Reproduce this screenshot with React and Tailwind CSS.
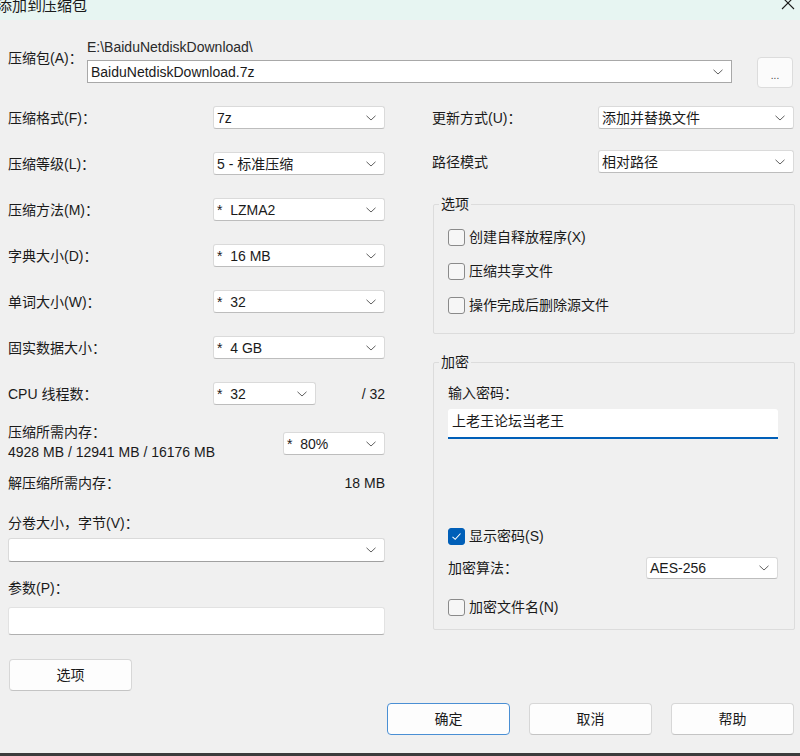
import React from 'react';

const Chevron = () => (
  <svg width="10" height="6" viewBox="0 0 10 6" className="shrink-0">
    <polyline points="0.5,0.8 5,5 9.5,0.8" fill="none" stroke="#606060" strokeWidth="1" />
  </svg>
);

function Combo({ value, className = '' }) {
  return (
    <div className={`flex items-center justify-between bg-white border border-[#dadada] border-b-[#bdbdbd] rounded-[3px] pl-[3px] pr-[8px] ${className}`}>
      <span className="whitespace-pre">{value}</span>
      <Chevron />
    </div>
  );
}

function Row({ label, children }) {
  return (
    <div className="flex items-center h-[23px]">
      <span className="w-[205px] shrink-0">{label}</span>
      {children}
    </div>
  );
}

function Check({ label, checked }) {
  return (
    <div className="flex items-center h-[20px]">
      <span
        className={`w-[17px] h-[17px] rounded-[3px] border flex items-center justify-center shrink-0 ${
          checked ? 'bg-[#005fb8] border-[#005fb8]' : 'bg-[#f6f6f6] border-[#8a8a8a]'
        }`}
      >
        {checked && (
          <svg width="11" height="9" viewBox="0 0 11 9">
            <polyline points="1.5,4.8 4.2,7.3 9.5,1.5" fill="none" stroke="#ffffff" strokeWidth="1.1" />
          </svg>
        )}
      </span>
      <span className="ml-[4px]">{label}</span>
    </div>
  );
}

function Button({ children, primary }) {
  return (
    <button
      className={`w-[123px] h-[32px] bg-[#fdfdfd] rounded-[4px] border ${
        primary ? 'border-[#4a8fd4]' : 'border-[#d7d7d7] border-b-[#c4c4c4]'
      }`}
    >
      {children}
    </button>
  );
}

export default function App() {
  return (
    <div className="w-[800px] h-[756px] overflow-hidden flex flex-col bg-[#f0f0f0] text-[#1a1a1a] text-[14px] leading-[20px] font-['Liberation_Sans','Noto_Sans_CJK_SC',sans-serif]">
      {/* Title bar */}
      <div className="h-[20px] shrink-0 bg-[#e7f5f2] flex items-start justify-between overflow-hidden">
        <span className="-ml-[3px] -mt-[4px] text-[15px]">添加到压缩包</span>
        <svg width="14" height="14" viewBox="0 0 14 14" className="-mt-[4px] mr-[5px]">
          <path d="M1 1L13 13M13 1L1 13" stroke="#1a1a1a" strokeWidth="1.1" />
        </svg>
      </div>

      {/* Archive path */}
      <div className="flex pl-[8px] shrink-0">
        <span className="w-[79px] mt-[28px]">压缩包(A)：</span>
        <div className="flex flex-col">
          <span className="mt-[19px] leading-[16px] text-[#2a2a2a]">E:\BaiduNetdiskDownload\</span>
          <div className="mt-[5px] w-[645px] h-[23px] flex items-center justify-between bg-white border border-[#a8a8a8] pl-[3px] pr-[8px]">
            <span>BaiduNetdiskDownload.7z</span>
            <Chevron />
          </div>
        </div>
        <button className="ml-[25px] mt-[37px] w-[36px] h-[31px] bg-[#fbfbfb] border border-[#dcdcdc] rounded-[4px] text-[10px] leading-[10px] text-[#444] pt-[6px]">
          ...
        </button>
      </div>

      <div className="flex pl-[8px] mt-[18px] shrink-0">
        {/* Left column */}
        <div className="w-[377px] flex flex-col">
          <div className="flex flex-col gap-[23px]">
            <Row label="压缩格式(F)："><Combo value="7z" className="w-[172px] h-[23px]" /></Row>
            <Row label="压缩等级(L)："><Combo value="5 - 标准压缩" className="w-[172px] h-[23px]" /></Row>
            <Row label="压缩方法(M)："><Combo value="*  LZMA2" className="w-[172px] h-[23px]" /></Row>
            <Row label="字典大小(D)："><Combo value="*  16 MB" className="w-[172px] h-[23px]" /></Row>
            <Row label="单词大小(W)："><Combo value="*  32" className="w-[172px] h-[23px]" /></Row>
            <Row label="固实数据大小："><Combo value="*  4 GB" className="w-[172px] h-[23px]" /></Row>
            <Row label="CPU 线程数：">
              <Combo value="*  32" className="w-[103px] h-[23px]" />
              <span className="flex-1 text-right">/ 32</span>
            </Row>
          </div>

          <div className="mt-[17px] flex justify-between">
            <div className="flex flex-col">
              <span>压缩所需内存：</span>
              <span>4928 MB / 12941 MB / 16176 MB</span>
            </div>
            <Combo value="*  80%" className="mt-[10px] w-[102px] h-[23px]" />
          </div>

          <div className="mt-[11px] flex justify-between">
            <span>解压缩所需内存：</span>
            <span>18 MB</span>
          </div>

          <span className="mt-[20px]">分卷大小，字节(V)：</span>
          <div className="mt-[5px] h-[24px] flex items-center justify-end bg-white border border-[#dadada] border-b-[#a0a0a0] rounded-[3px] pr-[8px]">
            <Chevron />
          </div>

          <span className="mt-[16px]">参数(P)：</span>
          <div className="mt-[9px] h-[28px] bg-white border border-[#e2e2e2] border-b-[#b0b0b0] rounded-[3px]" />

          <div className="mt-[24px] ml-[1px]">
            <Button>选项</Button>
          </div>
        </div>

        {/* Right column */}
        <div className="w-[363px] ml-[47px] flex flex-col">
          <div className="flex items-center justify-between h-[23px] pr-[1px]">
            <span>更新方式(U)：</span>
            <Combo value="添加并替换文件" className="w-[196px] h-[23px]" />
          </div>
          <div className="mt-[21px] flex items-center justify-between h-[23px] pr-[1px]">
            <span>路径模式</span>
            <Combo value="相对路径" className="w-[196px] h-[23px]" />
          </div>

          <fieldset className="mt-[21px] ml-[1px] border border-[#dcdcdc] rounded-[2px]">
            <legend className="ml-[5px] px-[2px] leading-[20px]">选项</legend>
            <div className="flex flex-col gap-[14px] pl-[14px] pr-[16px] pt-[13px] pb-[18px]">
              <Check label="创建自释放程序(X)" />
              <Check label="压缩共享文件" />
              <Check label="操作完成后删除源文件" />
            </div>
          </fieldset>

          <fieldset className="mt-[18px] ml-[1px] border border-[#dcdcdc] rounded-[2px]">
            <legend className="ml-[5px] px-[2px] leading-[20px]">加密</legend>
            <div className="flex flex-col pl-[14px] pr-[16px] pt-[11px] pb-[12px]">
              <span>输入密码：</span>
              <div className="mt-[6px] h-[30px] bg-white border-b-2 border-[#005fb8] rounded-t-[3px] pl-[4px] pt-[2px]">
                上老王论坛当老王
              </div>
              <div className="mt-[87px]">
                <Check label="显示密码(S)" checked />
              </div>
              <div className="mt-[11px] h-[22px] flex items-center justify-between">
                <span>加密算法：</span>
                <Combo value="AES-256" className="w-[132px] h-[22px]" />
              </div>
              <div className="mt-[18px]">
                <Check label="加密文件名(N)" />
              </div>
            </div>
          </fieldset>
        </div>
      </div>

      {/* Bottom buttons */}
      <div className="mt-[12px] flex justify-end gap-[19px] pr-[6px] shrink-0">
        <Button primary>确定</Button>
        <Button>取消</Button>
        <Button>帮助</Button>
      </div>

      <div className="flex-1" />
      <div className="h-[3px] bg-[#3c3c3c] shrink-0" />
    </div>
  );
}
